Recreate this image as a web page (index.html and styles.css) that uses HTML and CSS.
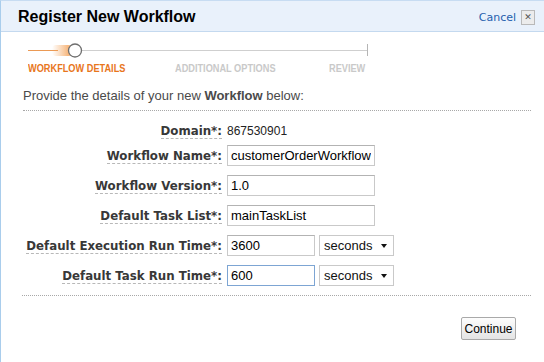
FILE: index.html
```html
<!DOCTYPE html>
<html lang="en">
<head>
    <meta charset="UTF-8">
    <title>Register New Workflow</title>
    <link rel="stylesheet" href="styles.css">
</head>
<body>
    <div class="dialog">
        <div class="dialog-header">
            <h1>Register New Workflow</h1>
            <div class="header-actions">
                <a href="#" class="cancel">Cancel</a>
                <span class="close">&#x2715;</span>
            </div>
        </div>

        <div class="dialog-body">
            <div class="steps">
                <svg class="track" width="342" height="16" viewBox="0 0 342 16">
                    <defs>
                        <linearGradient id="glow" x1="0" x2="1" y1="0" y2="0">
                            <stop offset="0" stop-color="#f5a55c" stop-opacity="0"/>
                            <stop offset="1" stop-color="#f39a4a" stop-opacity="0.9"/>
                        </linearGradient>
                    </defs>
                    <line x1="0" y1="7.5" x2="30" y2="7.5" stroke="#eb9a55" stroke-width="1"/>
                    <rect x="24" y="2" width="20" height="11" fill="url(#glow)" rx="4"/>
                    <line x1="54" y1="7.5" x2="339" y2="7.5" stroke="#cfcfcf" stroke-width="1"/>
                    <line x1="339.5" y1="1" x2="339.5" y2="13" stroke="#b5b5b5" stroke-width="1"/>
                    <circle cx="47" cy="7.5" r="6.5" fill="#fff" stroke="#6e6e6e" stroke-width="1.3"/>
                </svg>
                <div class="step-labels">
                    <span class="step active">WORKFLOW DETAILS</span>
                    <span class="step">ADDITIONAL OPTIONS</span>
                    <span class="step">REVIEW</span>
                </div>
            </div>

            <p class="intro">Provide the details of your new <b>Workflow</b> below:</p>

            <div class="form">
                <div class="row short">
                    <label><span>Domain*:</span></label>
                    <div class="value">867530901</div>
                </div>
                <div class="row">
                    <label><span>Workflow Name*:</span></label>
                    <input type="text" class="wide" value="customerOrderWorkflow">
                </div>
                <div class="row">
                    <label><span>Workflow Version*:</span></label>
                    <input type="text" class="wide" value="1.0">
                </div>
                <div class="row">
                    <label><span>Default Task List*:</span></label>
                    <input type="text" class="wide" value="mainTaskList">
                </div>
                <div class="row">
                    <label><span>Default Execution Run Time*:</span></label>
                    <input type="text" class="narrow" value="3600">
                    <div class="select-wrap">
                        <select><option>seconds</option></select>
                    </div>
                </div>
                <div class="row">
                    <label><span>Default Task Run Time*:</span></label>
                    <input type="text" class="narrow focused" value="600">
                    <div class="select-wrap">
                        <select><option>seconds</option></select>
                    </div>
                </div>
            </div>

            <div class="footer">
                <button>Continue</button>
            </div>
        </div>
    </div>
</body>
</html>
```

FILE: styles.css
```css
html, body { margin: 0; padding: 0; background: #fff; }
body { font-family: "Liberation Sans", Arial, sans-serif; color: #333; }

.dialog { width: 544px; height: 362px; box-sizing: border-box; border-left: 1px solid #a9cdec; border-top: 1px solid #c7dcf2; background: #fff; }

.dialog-header { height: 30px; background: #e9f1fb; border-bottom: 1px solid #c4d9ef; display: flex; align-items: center; justify-content: space-between; padding: 0 9px 0 17px; }
.dialog-header h1 { margin: 0; font-size: 16px; font-weight: bold; color: #000; padding-top: 2px; }
.header-actions { display: flex; align-items: center; gap: 5px; padding-top: 2px; }
.cancel { font-family: "DejaVu Sans", Verdana, sans-serif; font-size: 11px; color: #1f5fae; text-decoration: none; }
.close { width: 12px; height: 13px; border: 1px solid #b9b9b9; background: #ececec; color: #555; font-size: 9px; line-height: 13px; text-align: center; font-family: "DejaVu Sans", sans-serif; font-weight: bold; }

.dialog-body { padding: 0 13px 0 21px; }

.steps { padding: 11px 0 0 6px; }
.track { display: block; }
.step-labels { display: grid; grid-template-columns: 147px 154px auto; margin-top: 3px; }
.step { display: block; white-space: nowrap; font-size: 11.5px; font-weight: bold; color: #c9c9c9; transform: scaleX(0.8); transform-origin: left center; }
.step.active { color: #e8761c; }

.intro { margin: 14px 0 0 1px; padding-bottom: 7px; font-size: 13px; color: #4a4a4a; border-bottom: 1px dotted #a8a8a8; }
.intro b { color: #4a4a4a; }

.form { padding-top: 11px; padding-bottom: 9px; border-bottom: 1px dotted #a8a8a8; }
.row { display: flex; align-items: center; height: 21px; margin-bottom: 9px; }
.row:last-child { margin-bottom: 0; }
.row.short { height: 17px; margin-bottom: 6px; }
.row label { width: 200px; text-align: right; margin-right: 5px; font-family: "DejaVu Sans", Verdana, sans-serif; font-size: 11.8px; font-weight: bold; color: #383838; white-space: nowrap; }
.row label span { border-bottom: 1px dashed #b8b8b8; }
.value { font-size: 12px; color: #222; }

input[type=text] { height: 21px; box-sizing: border-box; border: 1px solid #c9c9c9; border-top-color: #b3b3b3; padding: 0 3px; font-family: "Liberation Sans", Arial, sans-serif; font-size: 13px; color: #000; outline: none; margin: 0; }
input.wide { width: 148px; }
input.narrow { width: 88px; margin-right: 4px; }
input.focused { border-color: #7da5d3; }

.select-wrap { position: relative; }
.select-wrap::after { content: ""; position: absolute; right: 7px; top: 9px; border-left: 3.5px solid transparent; border-right: 3.5px solid transparent; border-top: 4px solid #111; pointer-events: none; }
select { appearance: none; -webkit-appearance: none; width: 75px; height: 21px; border: 1px solid #c9c9c9; border-radius: 0; background: #fff; padding: 0 0 0 4px; font-family: "Liberation Sans", Arial, sans-serif; font-size: 13px; color: #111; margin: 0; }

.footer { display: flex; justify-content: flex-end; padding: 21px 15px 0 0; }
button { height: 23px; width: 55px; padding: 0; border: 1px solid #a9a9a9; border-radius: 2px; background: linear-gradient(#fdfdfd, #e4e4e4); font-family: "Liberation Sans", Arial, sans-serif; font-size: 12px; color: #000; }
```
